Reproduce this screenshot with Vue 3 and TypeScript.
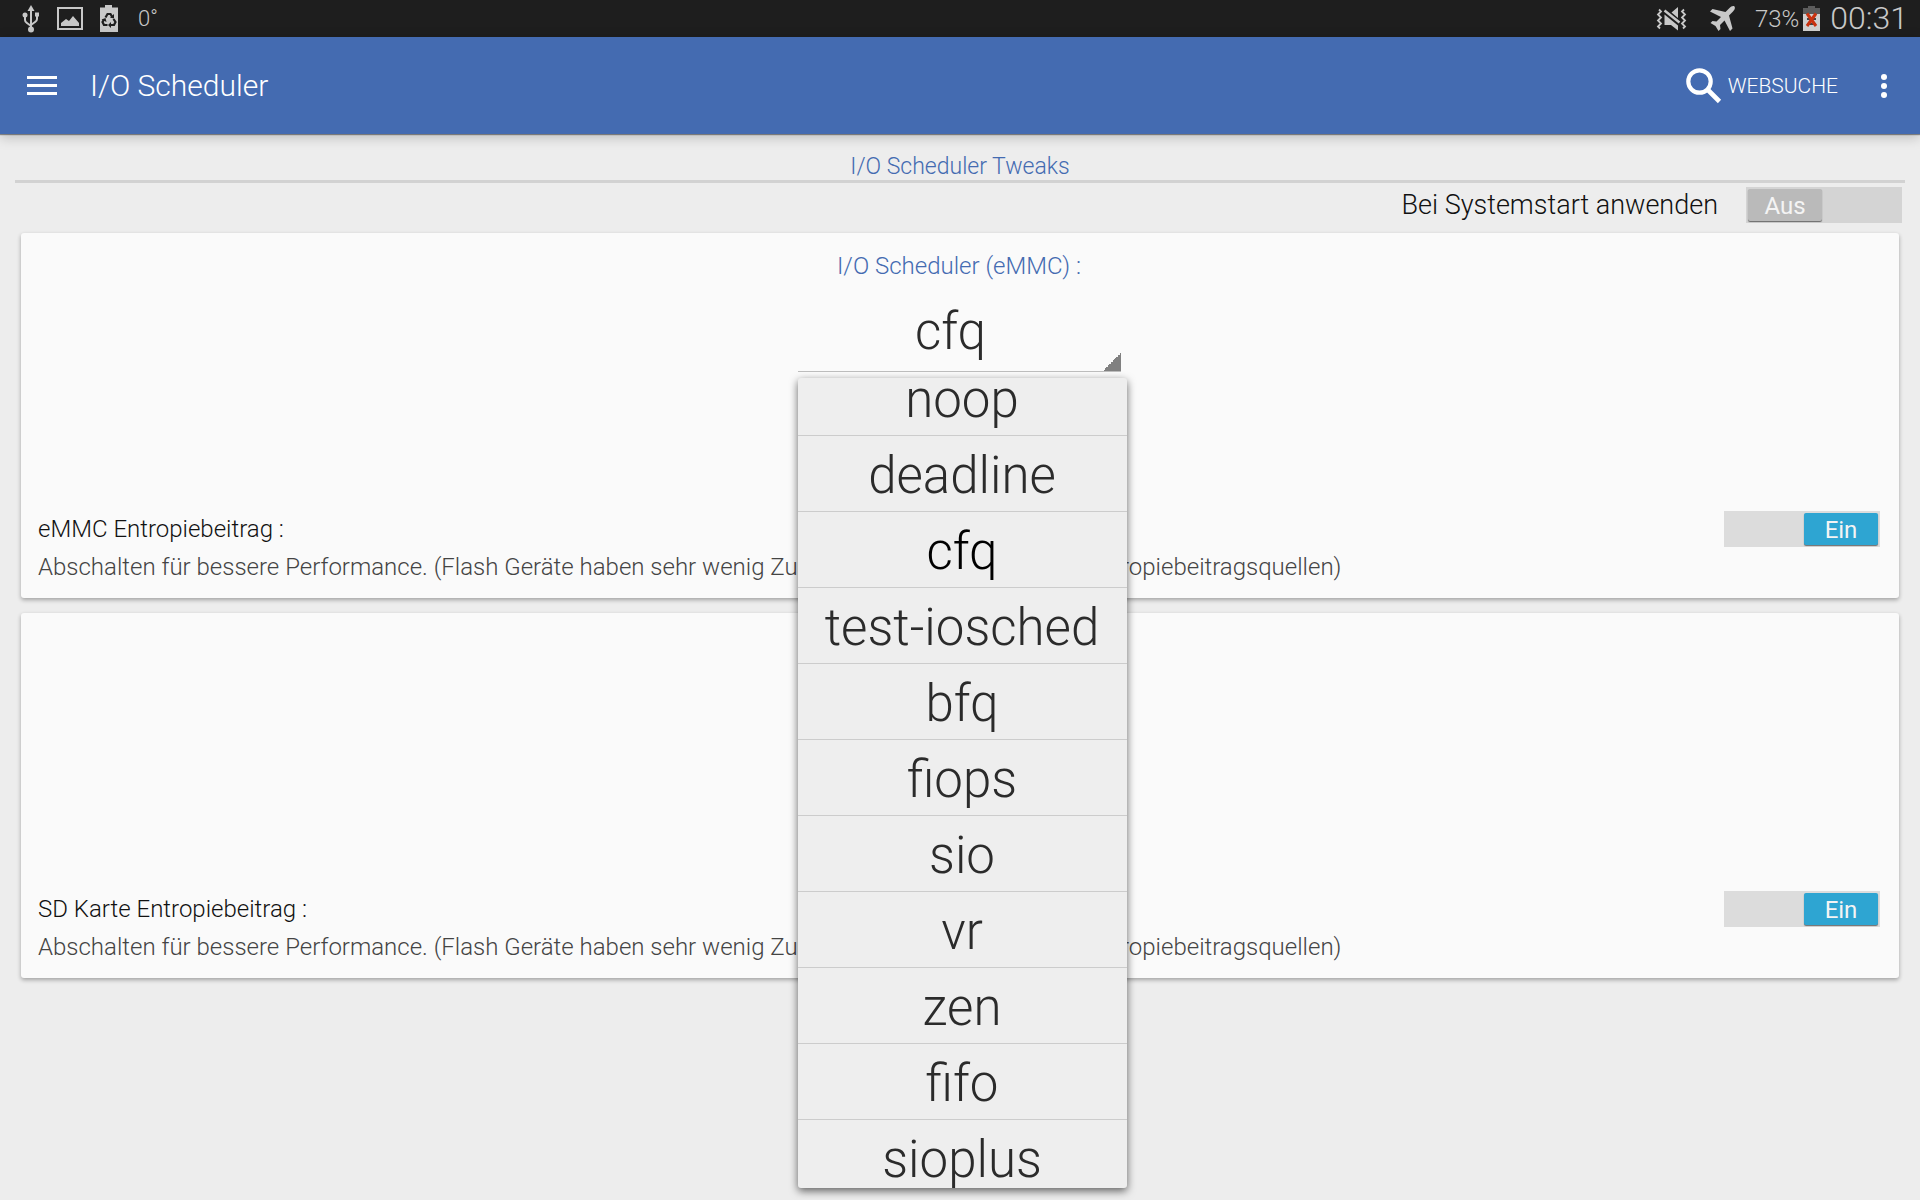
<script setup lang="ts">
import { ref } from 'vue'

const schedulers: string[] = [
  'noop', 'deadline', 'cfq', 'test-iosched', 'bfq', 'fiops',
  'sio', 'vr', 'zen', 'fifo', 'sioplus',
]
const selected = ref('cfq')
const applyOnBoot = ref(false)

interface Device {
  id: string
  heading: string
  label: string
}
const devices: Device[] = [
  { id: 'emmc', heading: 'I/O Scheduler (eMMC) :', label: 'eMMC Entropiebeitrag :' },
  { id: 'sd', heading: '', label: 'SD Karte Entropiebeitrag :' },
]
const entropy = ref<Record<string, boolean>>({ emmc: true, sd: true })
const description =
  'Abschalten für bessere Performance. (Flash Geräte haben sehr wenig Zufälligkeit und sind schlichte Entropiebeitragsquellen)'
</script>

<template>
  <div class="screen">
    <div class="status">
      <div class="status-left">
        <svg class="usb" width="18" height="28" viewBox="0 0 18 28" fill="none" stroke="#c8c8c8" stroke-width="2">
          <path d="M9 4V24M3 11v4q0 2 2 3l4 3M15 11v3q0 2-2 3l-4 3" />
          <path d="M9 0l3.500 6h-7z" fill="#c8c8c8" stroke="none" />
          <circle cx="9" cy="24.500" r="3" fill="#c8c8c8" stroke="none" />
          <circle cx="3" cy="10" r="2.500" fill="#c8c8c8" stroke="none" />
          <path d="M13 7.500h4v4h-4z" fill="#c8c8c8" stroke="none" />
        </svg>
        <svg class="picture" width="26" height="23" viewBox="0 0 26 23">
          <rect x="1" y="1" width="24" height="21" fill="none" stroke="#c8c8c8" stroke-width="2" />
          <path d="M4 19v-3l5-4 3 2 4-5 6 7v3z" fill="#c8c8c8" />
        </svg>
        <svg class="recycle" width="18" height="27" viewBox="0 0 18 27">
          <path d="M0 2.500h5V0h7v2.500h6V27H0z" fill="#c8c8c8" />
          <g fill="none" stroke="#1e1e1e" stroke-width="2.200">
            <path d="M5.500 12.500l2-3.500h3l2 3.500M13.500 14l2 3-1.500 3h-3.500M7.500 20H4l-1.500-3 1.500-2.500" />
          </g>
          <path d="M10 12.500l4 1V9zM11 17v6l-3-3zM1.500 14.500l4-1.500 1 4z" fill="#1e1e1e" />
        </svg>
        <span class="degrees">0<sup>°</sup></span>
      </div>
      <div class="status-right">
        <svg class="mute" width="32" height="24" viewBox="0 0 32 24" fill="none" stroke="#c8c8c8" stroke-width="1.800">
          <path d="M3 2.500l2 2L2 7.500l3 3-3 3 3 3-3 3 2 2" />
          <path d="M28 2.500l-2 2 3 3-3 3 3 3-3 3 3 3-2 2" />
          <path d="M8.500 7.500l13.500 11v5L15 18H8.500zM15.500 5.500L22 0v11z" fill="#c8c8c8" stroke="none" />
          <path d="M8.500 3.500l15 12" stroke-width="2.400" />
        </svg>
        <svg class="plane" width="26" height="26" viewBox="0 0 26 26" fill="#c8c8c8">
          <path d="M25.500 .500c1 1.500 0 3.500-1.500 5l-4 4 3.500 13-2.500 2.500-5.500-10.500-4.500 4.500.500 4-2 2-3-5-5-3 2-2 4 .500 4.500-4.500L1 5.500 3.500 3l13 3 4-4c1.500-1.500 3.500-2.500 5-1.500z" />
        </svg>
        <span class="percent">73%</span>
        <svg class="battery" width="18" height="25" viewBox="0 0 18 25">
          <path d="M0 2h5V0h7v2h5v23H0z" fill="#5c5c5c" />
          <path d="M0 8h17v17H0z" fill="#cfcfcf" />
          <path d="M4 13h9M4 18h9" stroke="#444" stroke-width="2" />
          <path d="M4 7.500l9 12.500M13 7.500L4 20" stroke="#c9310f" stroke-width="3" />
        </svg>
        <time class="clock">00:31</time>
      </div>
    </div>

    <header class="appbar">
      <button class="menu" type="button" aria-label="Menü"><i></i><i></i><i></i></button>
      <h1>I/O Scheduler</h1>
      <button class="search" type="button">
        <svg width="36" height="36" viewBox="0 0 36 36" fill="none" stroke="#fff">
          <circle cx="13.500" cy="13.500" r="11.200" stroke-width="4.200" />
          <path d="M21.500 21.500l12 12" stroke-width="4.600" />
        </svg>
        <span>WEBSUCHE</span>
      </button>
      <button class="more" type="button" aria-label="Mehr"><i></i><i></i><i></i></button>
    </header>

    <main>
      <h2 class="section">I/O Scheduler Tweaks</h2>
      <div class="boot">
        <label for="boot">Bei Systemstart anwenden</label>
        <span class="switch" :class="{ on: applyOnBoot }">
          <input id="boot" v-model="applyOnBoot" type="checkbox" role="switch" />
          <span class="thumb">{{ applyOnBoot ? 'Ein' : 'Aus' }}</span>
        </span>
      </div>

      <section v-for="d in devices" :key="d.id" class="card">
        <template v-if="d.heading">
          <label class="heading" for="scheduler">{{ d.heading }}</label>
          <div class="spinner">
            <select id="scheduler" v-model="selected">
              <option v-for="s in schedulers" :key="s" :value="s">{{ s }}</option>
            </select>
            <ul class="popup" role="listbox" aria-label="I/O Scheduler">
              <li
                v-for="s in schedulers"
                :key="s"
                role="option"
                :aria-selected="s === selected"
                @click="selected = s"
              >{{ s }}</li>
            </ul>
          </div>
        </template>
        <div class="setting">
          <label :for="d.id">{{ d.label }}</label>
          <span class="switch" :class="{ on: entropy[d.id] }">
            <input :id="d.id" v-model="entropy[d.id]" type="checkbox" role="switch" />
            <span class="thumb">{{ entropy[d.id] ? 'Ein' : 'Aus' }}</span>
          </span>
        </div>
        <p>{{ description }}</p>
      </section>
    </main>
  </div>
</template>

<style>
body {
  margin: 0;
  background: #ededed;
}
</style>

<style scoped>
.screen {
  min-height: 100vh;
  overflow: hidden;
  background: #ededed;
  color: #111;
  font-family: Roboto, "Liberation Sans", sans-serif;
  font-weight: 300;
}
button {
  border: 0;
  padding: 0;
  background: none;
  color: inherit;
  font: inherit;
  cursor: pointer;
}
.status {
  display: flex;
  justify-content: space-between;
  height: 37px;
  padding: 0 12px 0 22px;
  background: #1e1e1e;
  color: #c8c8c8;
}
.status-left,
.status-right {
  display: flex;
  align-items: center;
}
.picture {
  margin-left: 17px;
}
.recycle {
  margin-left: 17px;
}
.degrees {
  margin-left: 20px;
  font-size: 22px;
  line-height: 37px;
}
.degrees sup {
  font-size: 20px;
  line-height: 0;
  vertical-align: 2px;
}
.plane {
  margin-left: 21px;
}
.percent {
  margin-left: 20px;
  font-size: 24px;
}
.battery {
  margin-left: 4px;
}
.clock {
  margin-left: 9px;
  font-size: 32px;
  line-height: 36px;
  padding-bottom: 1px;
}
.appbar {
  position: relative;
  display: flex;
  align-items: center;
  height: 97px;
  padding: 0 33px 0 27px;
  background: #446bb1;
  color: #fff;
  box-shadow: 0 1px 1px rgba(0, 0, 0, 0.4), 0 3px 12px rgba(0, 0, 0, 0.22);
}
.menu {
  display: flex;
  flex-direction: column;
  gap: 4px;
  width: 30px;
}
.menu i {
  height: 3px;
  margin-bottom: 1px;
  background: #fff;
}
h1 {
  flex: 1;
  margin: 0 0 0 33px;
  font-size: 30px;
  font-weight: 300;
}
.search {
  display: flex;
  align-items: center;
  gap: 6px;
  font-size: 21px;
}
.more {
  display: flex;
  flex-direction: column;
  gap: 3px;
  margin-left: 43px;
}
.more i {
  width: 6px;
  height: 6px;
  border-radius: 50%;
  background: #fff;
}
main {
  display: flex;
  flex-direction: column;
  padding: 20px 15px 18px;
}
.section {
  margin: 0;
  border-bottom: 3px solid #d2d2d2;
  color: #446bb1;
  font-size: 23px;
  font-weight: 300;
  line-height: 26px;
  text-align: center;
}
.boot {
  display: flex;
  justify-content: flex-end;
  align-items: center;
  gap: 28px;
  padding: 4px 3px 10px;
  font-size: 27px;
  line-height: 36px;
}
.switch {
  position: relative;
  display: flex;
  box-sizing: border-box;
  width: 156px;
  height: 36px;
  padding: 2px;
  background: #d4d4d4;
}
.switch input {
  position: absolute;
  inset: 0;
  width: 100%;
  height: 100%;
  margin: 0;
  opacity: 0;
  cursor: pointer;
}
.thumb {
  width: 74px;
  border-radius: 2px;
  background: #bababa;
  box-shadow: 0 1px 1px rgba(0, 0, 0, 0.5);
  color: #f4f4f4;
  font-size: 24px;
  line-height: 34px;
  font-weight: 400;
  text-align: center;
}
.switch.on {
  justify-content: flex-end;
  background: #dcdcdc;
}
.switch.on .thumb {
  background: #2ea5d2;
}
.card {
  display: flex;
  flex-direction: column;
  box-sizing: border-box;
  min-height: 365px;
  margin: 0 6px 15px;
  padding: 19px 19px 17px 17px;
  border-radius: 3px;
  background: #fafafa;
  box-shadow: 0 2px 4px rgba(0, 0, 0, 0.32);
}
.heading {
  align-self: center;
  color: #446bb1;
  font-size: 24px;
  line-height: 28px;
}
.spinner {
  position: relative;
  align-self: center;
  width: 323px;
  margin-top: 12px;
}
.spinner select {
  width: 100%;
  height: 80px;
  padding: 0 17px 0 0;
  border: 0;
  border-bottom: 1px solid #bdbdbd;
  appearance: none;
  background: linear-gradient(135deg, transparent 50%, #808080 50%) right bottom / 18px 18px no-repeat;
  color: #2b2b2b;
  font: inherit;
  font-size: 51px;
  text-align: center;
  text-align-last: center;
}
.popup {
  position: absolute;
  z-index: 1;
  top: 100%;
  left: 0;
  right: -6px;
  height: 810px;
  margin: 6px 0 0;
  padding: 0;
  overflow: hidden;
  border-radius: 3px;
  background: #eee;
  box-shadow: 0 3px 8px rgba(0, 0, 0, 0.6);
  color: #2b2b2b;
  font-size: 51px;
  line-height: 71px;
  text-align: center;
  list-style: none;
}
.popup li {
  padding-top: 4px;
  border-bottom: 1px solid #ccc;
  cursor: pointer;
}
.popup li:first-child {
  margin-top: -18px;
}
.popup li[aria-selected="true"] {
  color: #000;
}
.setting {
  display: flex;
  justify-content: space-between;
  align-items: center;
  margin-top: auto;
  font-size: 24px;
}
.card p {
  margin: 6px 0 0;
  color: #444;
  font-size: 24px;
  line-height: 28px;
}
</style>
